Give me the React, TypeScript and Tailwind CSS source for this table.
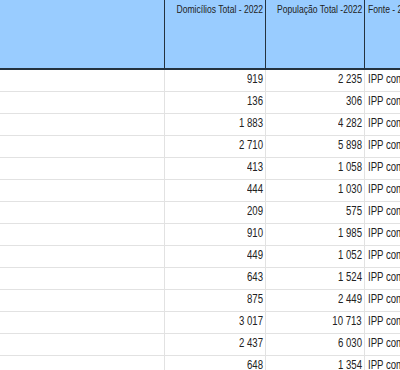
import React from "react";

const rows: [string, string][] = [
  ["919", "2 235"],
  ["136", "306"],
  ["1 883", "4 282"],
  ["2 710", "5 898"],
  ["413", "1 058"],
  ["444", "1 030"],
  ["209", "575"],
  ["910", "1 985"],
  ["449", "1 052"],
  ["643", "1 524"],
  ["875", "2 449"],
  ["3 017", "10 713"],
  ["2 437", "6 030"],
  ["648", "1 354"],
];

const font = { fontFamily: "'Liberation Sans', Arial, sans-serif" };

export default function App() {
  return (
    <div className="w-[400px] h-[370px] overflow-hidden bg-white text-[#222]" style={font}>
      <div className="w-[520px]">
        <div className="flex h-[70px] bg-[#99ccff] border-b-2 border-[#24323f] text-[11px] leading-[14px]">
          <div className="w-[165px] shrink-0 border-r border-[#24323f]" />
          <div className="w-[101px] shrink-0 border-r border-[#24323f] flex justify-end pr-[2px] pt-[2px] whitespace-nowrap">
            <span className="inline-block origin-right scale-x-[0.78]">Domicílios Total - 2022</span>
          </div>
          <div className="w-[99px] shrink-0 border-r border-[#24323f] flex justify-end pr-[2px] pt-[2px] whitespace-nowrap">
            <span className="inline-block origin-right scale-x-[0.78]">População Total -2022</span>
          </div>
          <div className="w-[150px] shrink-0 pl-[3px] pt-[2px] whitespace-nowrap">
            <span className="inline-block origin-left scale-x-[0.78]">Fonte - 2022</span>
          </div>
        </div>
        {rows.map(([a, b], i) => (
          <div key={i} className="flex h-[22px] border-b border-[#e2e2e2] text-[12px] leading-[14px]">
            <div className="w-[165px] shrink-0 border-r border-[#e2e2e2]" />
            <div className="w-[101px] shrink-0 border-r border-[#e2e2e2] flex items-center justify-end pr-[2px] pb-[3px] whitespace-nowrap">
              <span className="inline-block origin-right scale-x-[0.8]">{a}</span>
            </div>
            <div className="w-[99px] shrink-0 border-r border-[#e2e2e2] flex items-center justify-end pr-[2px] pb-[3px] whitespace-nowrap">
              <span className="inline-block origin-right scale-x-[0.8]">{b}</span>
            </div>
            <div className="w-[150px] shrink-0 flex items-center pl-[3px] pb-[3px] whitespace-nowrap">
              <span className="inline-block origin-left scale-x-[0.8]">IPP com base no Censo 2022</span>
            </div>
          </div>
        ))}
      </div>
    </div>
  );
}
